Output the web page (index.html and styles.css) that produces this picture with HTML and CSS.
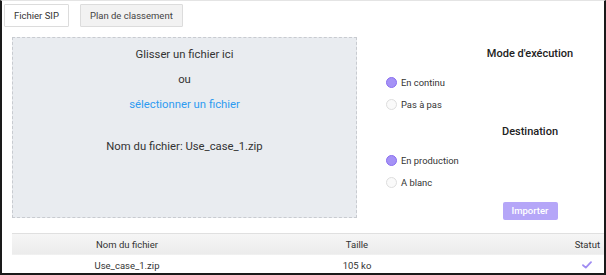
FILE: index.html
```html
<!DOCTYPE html>
<html lang="fr">
<head>
    <meta charset="UTF-8">
    <meta name="viewport" content="width=device-width, initial-scale=1.0">
    <title>Import SIP</title>
    <link rel="stylesheet" href="styles.css">
</head>
<body>
    <div class="frame">
        <div class="tabs">
            <button class="tab active">Fichier SIP</button>
            <button class="tab">Plan de classement</button>
        </div>
        <div class="upload-row">
            <div class="dropzone">
                <p class="drop-line">Glisser un fichier ici</p>
                <p class="drop-line">ou</p>
                <p class="drop-line link">sélectionner un fichier</p>
                <p class="drop-line file-name">Nom du fichier: Use_case_1.zip</p>
            </div>
            <div class="options">
                <h3 class="options-title">Mode d'exécution</h3>
                <label class="radio"><span class="dot checked"></span>En continu</label>
                <label class="radio"><span class="dot"></span>Pas à pas</label>
                <h3 class="options-title">Destination</h3>
                <label class="radio"><span class="dot checked"></span>En production</label>
                <label class="radio"><span class="dot"></span>A blanc</label>
                <div class="actions">
                    <button class="import-btn">Importer</button>
                </div>
            </div>
        </div>
        <table class="files">
            <tr>
                <th>Nom du fichier</th>
                <th>Taille</th>
                <th class="status">Statut</th>
            </tr>
            <tr>
                <td>Use_case_1.zip</td>
                <td>105 ko</td>
                <td class="status"><svg width="10" height="8" viewBox="0 0 10 8"><path d="M1 4.2 L3.8 6.6 L9 1.2" fill="none" stroke="#a08cf2" stroke-width="1.8" stroke-linecap="round" stroke-linejoin="round"/></svg></td>
            </tr>
        </table>
    </div>
</body>
</html>
```

FILE: styles.css
```css
body {
    margin: 0;
    font-family: 'Roboto', 'Liberation Sans', sans-serif;
    background-color: #ffffff;
    color: #333;
}
.frame {
    width: 606px;
    height: 275px;
    box-sizing: border-box;
    border-left: 2px solid #1a1a1a;
    border-right: 2px solid #1a1a1a;
    border-bottom: 2px solid #1a1a1a;
    border-top: 1px solid #e4e4e4;
    padding: 3px 0 0 2px;
    overflow: hidden;
}
.tabs {
    display: flex;
    gap: 11px;
}
.tab {
    height: 23px;
    padding: 0 9px;
    font-family: inherit;
    font-size: 9.5px;
    color: #333;
    background-color: #fff;
    border: 1px solid #dcdcdc;
    border-radius: 1px;
}
.tab:not(.active) {
    background-color: #f2f2f2;
    color: #444;
}
.upload-row {
    display: flex;
    margin-top: 10px;
    padding-left: 8px;
}
.dropzone {
    width: 345px;
    height: 181px;
    box-sizing: border-box;
    background-color: #e9ecf0;
    border: 1px dashed #c8cbd0;
    text-align: center;
    padding-top: 10px;
}
.drop-line {
    margin: 0;
    font-size: 11.3px;
    line-height: 14px;
    color: #333;
}
.drop-line + .drop-line {
    margin-top: 11px;
}
.drop-line.link {
    color: #2e9bf0;
}
.drop-line.file-name {
    margin-top: 28px;
}
.options {
    flex: 1;
    display: flex;
    flex-direction: column;
    padding-left: 29px;
}
.options-title {
    margin: 9px 0 9px 0;
    padding-left: 70px;
    text-align: center;
    font-size: 11px;
    font-weight: 500;
    line-height: 16px;
    color: #222;
}
.radio {
    display: flex;
    align-items: center;
    height: 22px;
    font-size: 9.4px;
    color: #333;
}
.dot {
    width: 9px;
    height: 9px;
    border-radius: 50%;
    border: 1px solid #dedede;
    background-color: #fafafa;
    margin-right: 4px;
}
.dot.checked {
    background-color: #a592f6;
    border-color: #8a6ff0;
}
.actions {
    padding-left: 70px;
    text-align: center;
    margin-top: 6px;
}
.import-btn {
    width: 55px;
    height: 18px;
    border: none;
    border-radius: 2px;
    background-color: #b5a6f8;
    color: #fff;
    font-family: inherit;
    font-size: 9.5px;
    font-weight: 500;
    padding: 0;
}
.files {
    margin: 13px 0 0 8px;
    width: 592px;
    border-collapse: collapse;
    font-size: 9.5px;
    color: #333;
}
.files th {
    height: 21px;
    font-weight: 400;
    background: linear-gradient(#f6f6f6, #ebebeb);
    border-top: 1px solid #e0e0e0;
    padding: 0;
}
.files td {
    height: 21px;
    text-align: center;
    padding: 0;
}
.files th:nth-child(1), .files td:nth-child(1) { width: 230px; }
.files th:nth-child(2), .files td:nth-child(2) { width: 230px; }
.files .status {
    text-align: right;
    padding-right: 4px;
}
.files td.status {
    padding-right: 12px;
}
```
